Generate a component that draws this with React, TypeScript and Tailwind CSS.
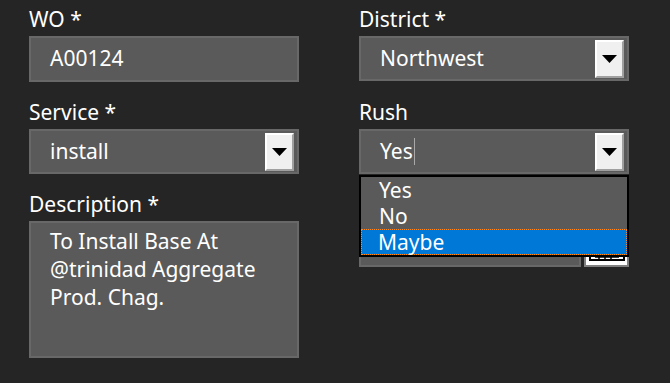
import React from "react";

const Arrow = () => (
  <div className="flex h-[38px] w-[29px] items-center justify-center border-2 border-t-white border-l-white border-r-[#a0a0a0] border-b-[#a0a0a0] bg-[#f0f0f0]">
    <svg width="15" height="8" viewBox="0 0 15 8">
      <path d="M0 0 H15 L7.5 8 Z" fill="#000" />
    </svg>
  </div>
);

const Label = ({ children }: { children?: React.ReactNode }) => (
  <div className="h-[33px] pt-[5px] leading-[28px] mb-[3px]">{children}</div>
);

const TextBox = ({ value }: { value: string }) => (
  <div className="flex h-[46px] items-center border-2 border-[#686868] bg-[#5a5a5a] pl-[19px]">
    {value}
  </div>
);

const Select = ({ value, caret }: { value: string; caret?: boolean }) => (
  <div className="flex h-[45px] items-center justify-between border-2 border-[#686868] bg-[#5a5a5a] pl-[19px] pr-[3px]">
    <div className="flex items-center">
      <span>{value}</span>
      {caret && <span className="ml-[1px] h-[27px] w-px bg-[#a8a8a8]" />}
    </div>
    <Arrow />
  </div>
);

export default function App() {
  return (
    <div className="h-[383px] overflow-hidden bg-[#252525] text-[21px] text-white font-['Noto_Sans',sans-serif]">
      <div className="grid grid-cols-[270px_270px] gap-x-[60px] gap-y-[11px] pl-[29px]">
        <div>
          <Label>WO *</Label>
          <TextBox value="A00124" />
        </div>
        <div>
          <Label>District *</Label>
          <Select value="Northwest" />
        </div>

        <div>
          <Label>Service *</Label>
          <Select value="install" />
        </div>
        <div className="relative z-10">
          <Label>Rush</Label>
          <Select value="Yes" caret />
          {/* open list */}
          <div className="absolute left-0 top-[82px] w-[270px] border-2 border-black bg-[#5a5a5a]">
            <div className="h-[26px] leading-[26px] pl-[18px]">Yes</div>
            <div className="h-[26px] leading-[26px] pl-[18px]">No</div>
            <div className="h-[26px] leading-[24px] pl-[16px] bg-[#0078d7] border border-dotted border-[#ff8c1a]">
              Maybe
            </div>
          </div>
        </div>

        <div>
          <Label>Description *</Label>
          <div className="h-[137px] border-2 border-[#686868] bg-[#5a5a5a] pl-[19px] pt-[4px] leading-[28px]">
            To Install Base At
            <br />
            @trinidad Aggregate
            <br />
            Prod. Chag.
          </div>
        </div>
        <div>
          {/* label hidden under the open list */}
          <Label />
          <div className="flex gap-[3px]">
            <div className="h-[46px] w-[224px] border-2 border-[#686868] bg-[#5a5a5a]" />
            <div className="flex h-[46px] w-[45px] items-end justify-center border-2 border-[#808080] bg-white pb-[2px]">
              <svg width="36" height="14" viewBox="0 0 36 14">
                <rect x="1" y="1" width="34" height="10" fill="none" stroke="#000" strokeWidth="2" />
                <path d="M6 8 H30 M10 5 V10 M16 5 V10 M22 5 V10" stroke="#000" strokeWidth="1.5" />
              </svg>
            </div>
          </div>
        </div>

        <div className="mt-[3px]">
          <Label>Wk Ahead</Label>
        </div>
        <div className="mt-[3px]">
          <Label>Wk Date</Label>
        </div>
      </div>
    </div>
  );
}
